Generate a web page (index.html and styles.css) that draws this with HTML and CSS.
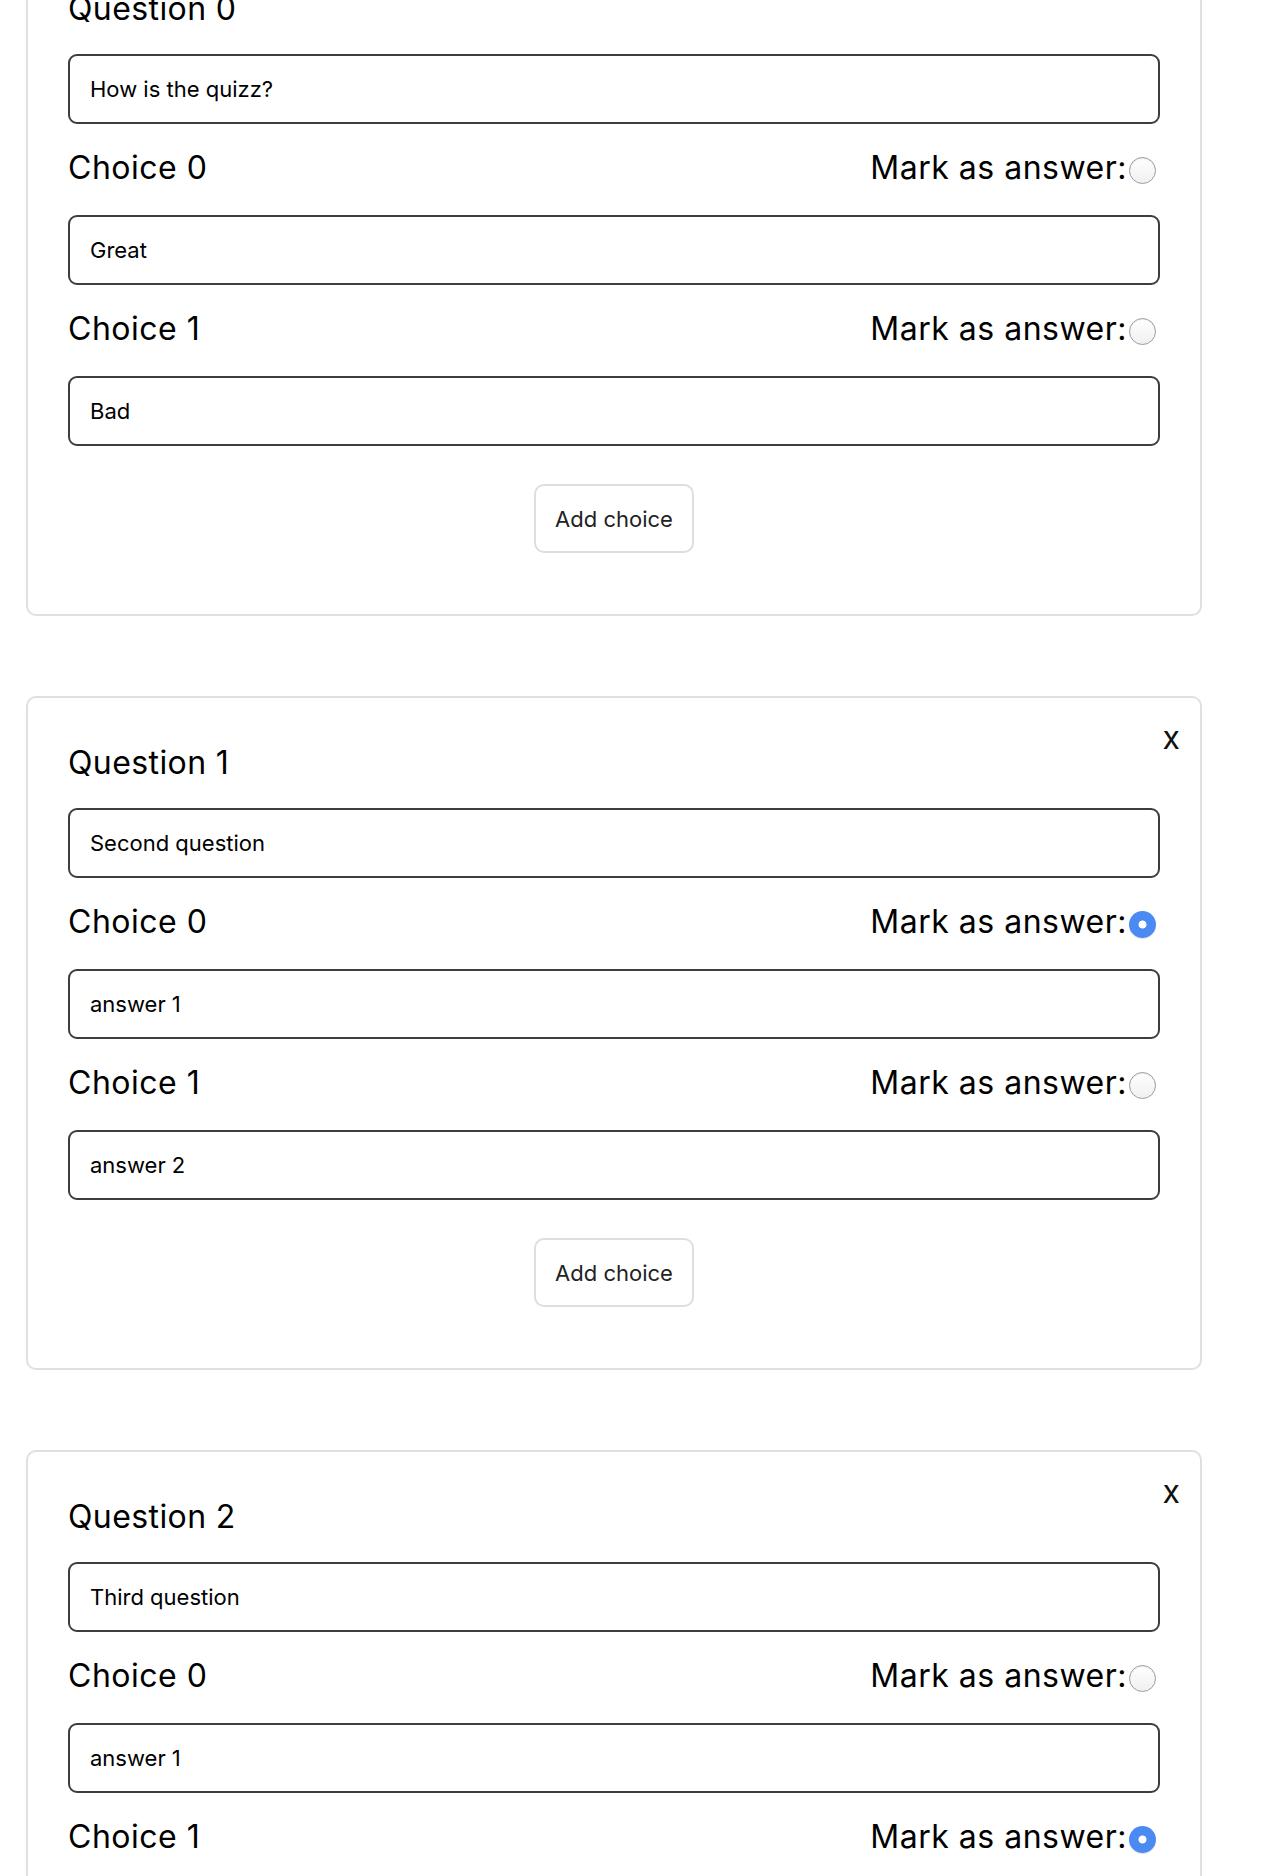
FILE: index.html
```html
<!DOCTYPE html>
<html lang="en">
<head>
<meta charset="utf-8">
<title>Quiz editor</title>
<link rel="stylesheet" href="styles.css">
</head>
<body>
<main class="questions">
  <section class="card">
    <h2 class="q-title">Question 0</h2>
    <input class="field" type="text" value="How is the quizz?">
    <div class="choice">
      <div class="choice-head"><span class="label">Choice 0</span><label class="mark">Mark as answer:<input class="radio" type="radio" name="q0"></label></div>
      <input class="field" type="text" value="Great">
    </div>
    <div class="choice">
      <div class="choice-head"><span class="label">Choice 1</span><label class="mark">Mark as answer:<input class="radio" type="radio" name="q0"></label></div>
      <input class="field" type="text" value="Bad">
    </div>
    <button class="add" type="button">Add choice</button>
  </section>

  <section class="card">
    <button class="close" type="button">x</button>
    <h2 class="q-title">Question 1</h2>
    <input class="field" type="text" value="Second question">
    <div class="choice">
      <div class="choice-head"><span class="label">Choice 0</span><label class="mark">Mark as answer:<input class="radio" type="radio" name="q1" checked></label></div>
      <input class="field" type="text" value="answer 1">
    </div>
    <div class="choice">
      <div class="choice-head"><span class="label">Choice 1</span><label class="mark">Mark as answer:<input class="radio" type="radio" name="q1"></label></div>
      <input class="field" type="text" value="answer 2">
    </div>
    <button class="add" type="button">Add choice</button>
  </section>

  <section class="card">
    <button class="close" type="button">x</button>
    <h2 class="q-title">Question 2</h2>
    <input class="field" type="text" value="Third question">
    <div class="choice">
      <div class="choice-head"><span class="label">Choice 0</span><label class="mark">Mark as answer:<input class="radio" type="radio" name="q2"></label></div>
      <input class="field" type="text" value="answer 1">
    </div>
    <div class="choice">
      <div class="choice-head"><span class="label">Choice 1</span><label class="mark">Mark as answer:<input class="radio" type="radio" name="q2" checked></label></div>
      <input class="field" type="text" value="answer 2">
    </div>
    <button class="add" type="button">Add choice</button>
  </section>
</main>
</body>
</html>
```

FILE: styles.css
```css
html, body {
  margin: 0;
  padding: 0;
  background: #ffffff;
}

body {
  font-family: Inter, "Noto Sans", sans-serif;
  color: #000;
}

.questions {
  display: flex;
  flex-direction: column;
  gap: 80px;
  margin-top: -58px;
  padding-left: 26px;
}

.card {
  position: relative;
  box-sizing: border-box;
  width: 1176px;
  display: flex;
  flex-direction: column;
  border: 2px solid #e0e0e0;
  border-radius: 10px;
  padding: 45px 40px 61px 40px;
}

.close {
  position: absolute;
  top: 20px;
  right: 20px;
  border: none;
  background: none;
  padding: 0;
  font-family: Inter, sans-serif;
  font-size: 32px;
  line-height: 40px;
  color: #111;
  cursor: pointer;
}

.q-title {
  margin: 0 0 25px 0;
  font-family: Inter, sans-serif;
  font-weight: 400;
  font-size: 32px;
  line-height: 40px;
  letter-spacing: 0.4px;
  color: #000;
}

.field {
  box-sizing: border-box;
  width: 100%;
  height: 70px;
  border: 2px solid #3d3d3d;
  border-radius: 9px;
  padding: 0 20px;
  font-family: Inter, sans-serif;
  font-size: 22px;
  color: #000;
  background: #fff;
  outline: none;
}

.choice {
  display: flex;
  flex-direction: column;
}

.choice-head {
  display: flex;
  justify-content: space-between;
  align-items: center;
  height: 40px;
  margin: 24px 0 27px 0;
}

.label,
.mark {
  font-family: Inter, sans-serif;
  font-size: 32px;
  line-height: 40px;
  letter-spacing: 0.5px;
  color: #000;
}

.mark {
  display: flex;
  align-items: center;
}

.radio {
  appearance: none;
  -webkit-appearance: none;
  box-sizing: border-box;
  width: 27px;
  height: 27px;
  margin: 4px 4px 0 2px;
  border-radius: 50%;
  border: 1.5px solid #9c9c9c;
  background: linear-gradient(#ffffff, #f0f0f0);
  box-shadow: inset 0 1px 1px rgba(0, 0, 0, 0.08);
}

.radio:checked {
  border: none;
  background: radial-gradient(circle, #ffffff 0 3.6px, #4b89f3 4.4px);
  box-shadow: 0 1px 1px rgba(0, 0, 0, 0.12);
}

.add {
  align-self: center;
  box-sizing: border-box;
  height: 69px;
  margin-top: 38px;
  padding: 0 19px;
  border: 2px solid #dedede;
  border-radius: 10px;
  background: #fff;
  font-family: Inter, sans-serif;
  font-size: 22px;
  color: #222;
  cursor: pointer;
}
```
